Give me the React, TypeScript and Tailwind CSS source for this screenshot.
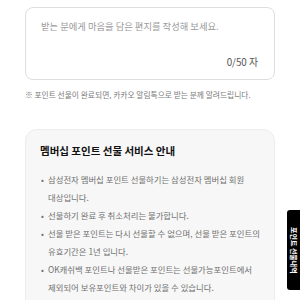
const notices = [
  '삼성전자 멤버십 포인트 선물하기는 삼성전자 멤버십 회원 대상입니다.',
  '선물하기 완료 후 취소처리는 불가합니다.',
  '선물 받은 포인트는 다시 선물할 수 없으며, 선물 받은 포인트의 유효기간은 1년 입니다.',
  'OK캐쉬백 포인트나 선물받은 포인트는 선물가능포인트에서 제외되어 보유포인트와 차이가 있을 수 있습니다.',
  '최근 멤버십 포인트 캐쉬백 신청하신 고객께서 포인트 선물할 경우 잔여 포인트가 부족할 수 있습니다.'
]

const App = () => (
  <div className="relative w-[300px] h-[300px] overflow-hidden bg-white font-['Noto_Sans_CJK_KR','Noto_Sans',sans-serif]">
    <div className="px-[25px] pt-[7px]">
      <div className="flex flex-col h-[73px] rounded-[8px] border border-[#dedede] pl-[15px] pr-[16px] pt-[11px] pb-[9px]">
        <textarea
          className="flex-1 resize-none bg-transparent outline-none text-[9.3px] leading-[14px] text-[#333] placeholder:text-[#9a9a9a]"
          placeholder="받는 분에게 마음을 담은 편지를 작성해 보세요."
        />
        <div className="text-right text-[9.8px] leading-[16px] text-[#555]">0/50 자</div>
      </div>

      <p className="mt-[8px] text-[7.75px] leading-[14px] text-[#7a7a7a] whitespace-nowrap">
        ※ 포인트 선물이 완료되면, 카카오 알림톡으로 받는 분께 알려드립니다.
      </p>

      <div className="mt-[27px] rounded-[12px] border border-[#ececec] bg-[#f7f7f7] pl-[14px] pr-[14px] pt-[12px] pb-[20px]">
        <h3 className="text-[10.5px] leading-[18px] font-bold text-[#111]">멤버십 포인트 선물 서비스 안내</h3>
        <ul className="mt-[10px]">
          {notices.map((text) => (
            <li key={text} className="flex text-[8.4px] leading-[18px] text-[#707070] break-keep">
              <span className="w-[8px] shrink-0 pl-[1px]">•</span>
              <span>{text}</span>
            </li>
          ))}
        </ul>
      </div>
    </div>

    <div className="absolute right-0 top-[210px] flex h-[80px] w-[13px] items-center justify-center rounded-l-[3px] bg-black">
      <span className="[writing-mode:vertical-rl] [text-orientation:sideways] text-[7px] font-bold text-white whitespace-nowrap">
        포인트 선물내역
      </span>
    </div>
  </div>
)

export default App
